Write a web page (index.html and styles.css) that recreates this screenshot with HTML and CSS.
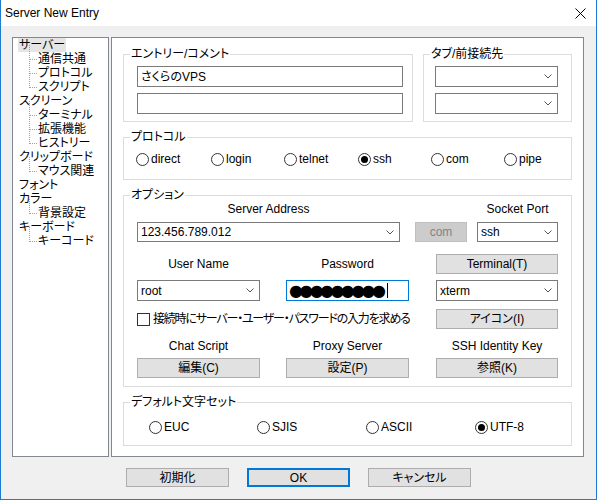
FILE: index.html
```html
<!DOCTYPE html>
<html lang="ja">
<head>
<meta charset="utf-8">
<title>Server New Entry</title>
<link rel="stylesheet" href="styles.css">
</head>
<body>
<div class="window">
  <div class="titlebar">
    <span class="title">Server New Entry</span>
    <svg class="close" width="11" height="11" viewBox="0 0 11 11"><path d="M0.5 0.5L10.5 10.5M10.5 0.5L0.5 10.5" stroke="#000" stroke-width="1" fill="none"/></svg>
  </div>
  <div class="client">
    <div class="main">
      <ul class="tree">
        <li><span class="node sel">サーバー</span>
          <ul class="sub">
            <li>通信共通</li>
            <li>プロトコル</li>
            <li>スクリプト</li>
          </ul>
        </li>
        <li><span class="node">スクリーン</span>
          <ul class="sub">
            <li>ターミナル</li>
            <li>拡張機能</li>
            <li>ヒストリー</li>
          </ul>
        </li>
        <li><span class="node">クリップボード</span>
          <ul class="sub">
            <li>マウス関連</li>
          </ul>
        </li>
        <li><span class="node">フォント</span></li>
        <li><span class="node">カラー</span>
          <ul class="sub">
            <li>背景設定</li>
          </ul>
        </li>
        <li><span class="node">キーボード</span>
          <ul class="sub">
            <li>キーコード</li>
          </ul>
        </li>
      </ul>

      <div class="panel">
        <div class="toprow">
          <fieldset class="group entry">
            <legend>エントリー/コメント</legend>
            <div class="stack entry-body">
              <div class="field">さくらのVPS</div>
              <div class="field"></div>
            </div>
          </fieldset>
          <fieldset class="group tabs">
            <legend>タブ/前接続先</legend>
            <div class="stack tabs-body">
              <div class="field combo w123"><span></span><svg class="chev" width="8" height="5" viewBox="0 0 8 5"><polyline points="0.5,0.5 4,4 7.5,0.5" fill="none" stroke="#555" stroke-width="1"/></svg></div>
              <div class="field combo w123"><span></span><svg class="chev" width="8" height="5" viewBox="0 0 8 5"><polyline points="0.5,0.5 4,4 7.5,0.5" fill="none" stroke="#555" stroke-width="1"/></svg></div>
            </div>
          </fieldset>
        </div>

        <fieldset class="group proto">
          <legend>プロトコル</legend>
          <div class="proto-body">
            <span class="radio"><span class="dot"></span>direct</span>
            <span class="radio"><span class="dot"></span>login</span>
            <span class="radio"><span class="dot"></span>telnet</span>
            <span class="radio on"><span class="dot"></span>ssh</span>
            <span class="radio"><span class="dot"></span>com</span>
            <span class="radio"><span class="dot"></span>pipe</span>
          </div>
        </fieldset>

        <fieldset class="group opts">
          <legend>オプション</legend>
          <div class="opts-body">
            <div class="row-a">
              <div class="col-addr">
                <div class="cap">Server Address</div>
                <div class="field combo h20"><span>123.456.789.012</span><svg class="chev" width="8" height="5" viewBox="0 0 8 5"><polyline points="0.5,0.5 4,4 7.5,0.5" fill="none" stroke="#555" stroke-width="1"/></svg></div>
              </div>
              <div class="col-com">
                <div class="btn disabled h20">com</div>
              </div>
              <div class="col-port">
                <div class="cap">Socket Port</div>
                <div class="field combo h20"><span>ssh</span><svg class="chev" width="8" height="5" viewBox="0 0 8 5"><polyline points="0.5,0.5 4,4 7.5,0.5" fill="none" stroke="#555" stroke-width="1"/></svg></div>
              </div>
            </div>

            <div class="grid3 row-b">
              <div class="cap w123">User Name</div>
              <div class="cap w123">Password</div>
              <div class="btn h20">Terminal(T)</div>
            </div>

            <div class="grid3 row-c">
              <div class="field combo w123"><span>root</span><svg class="chev" width="8" height="5" viewBox="0 0 8 5"><polyline points="0.5,0.5 4,4 7.5,0.5" fill="none" stroke="#555" stroke-width="1"/></svg></div>
              <div class="field pw w123"><span class="dots">●●●●●●●●●</span><span class="caret"></span></div>
              <div class="field combo"><span>xterm</span><svg class="chev" width="8" height="5" viewBox="0 0 8 5"><polyline points="0.5,0.5 4,4 7.5,0.5" fill="none" stroke="#555" stroke-width="1"/></svg></div>
            </div>

            <div class="grid3 row-d">
              <div class="check"><span class="box"></span><span class="check-text">接続時にサーバー・ユーザー・パスワードの入力を求める</span></div>
              <div class="btn h20">アイコン(I)</div>
            </div>

            <div class="grid3 row-e">
              <div class="cap w123">Chat Script</div>
              <div class="cap w123">Proxy Server</div>
              <div class="cap">SSH Identity Key</div>
            </div>

            <div class="grid3 row-f">
              <div class="btn h20 w123">編集(C)</div>
              <div class="btn h20 w123">設定(P)</div>
              <div class="btn h20">参照(K)</div>
            </div>
          </div>
        </fieldset>

        <fieldset class="group charset">
          <legend>デフォルト文字セット</legend>
          <div class="charset-body">
            <span class="radio"><span class="dot"></span>EUC</span>
            <span class="radio"><span class="dot"></span>SJIS</span>
            <span class="radio"><span class="dot"></span>ASCII</span>
            <span class="radio on"><span class="dot"></span>UTF-8</span>
          </div>
        </fieldset>
      </div>
    </div>

    <div class="actions">
      <div class="btn act">初期化</div>
      <div class="btn act default">OK</div>
      <div class="btn act">キャンセル</div>
    </div>
  </div>
</div>
</body>
</html>
```

FILE: styles.css
```css
* { box-sizing: border-box; }
html, body { margin: 0; padding: 0; }
body {
  width: 597px;
  height: 500px;
  overflow: hidden;
  background: #f0f0f0;
  color: #000;
  font-family: "Liberation Sans", "Noto Sans CJK JP", sans-serif;
  font-size: 12px;
  line-height: 14px;
  font-feature-settings: "palt";
}

.window {
  width: 597px;
  height: 500px;
  border: 1px solid #1f7bd2;
  border-top: 0;
  display: flex;
  flex-direction: column;
  background: #f0f0f0;
}

.titlebar {
  height: 26px;
  flex: none;
  background: #fff;
  display: flex;
  align-items: center;
  justify-content: space-between;
  padding: 0 10px 0 4px;
}
.title { font-size: 12px; }
.close { display: block; }

.client {
  flex: 1;
  padding: 11px 11px 0 11px;
}

.main {
  display: flex;
  gap: 2px;
  height: 420px;
}

/* tree */
.tree {
  width: 97px;
  flex: none;
  margin: 0;
  padding: 0 0 0 5px;
  list-style: none;
  background: #fff;
  border: 1px solid #828790;
}
.tree li { list-style: none; line-height: 14px; white-space: nowrap; }
.node { padding: 0 1px; display: inline-block; }
.sel { background: #e5e5e5; }
.sub {
  margin: 0;
  padding: 0 0 0 20px;
}
.sub li { position: relative; }
.sub li::before {
  content: "";
  position: absolute;
  left: -9px;
  top: -7px;
  width: 7px;
  height: 14px;
  border-left: 1px dotted #a0a0a0;
  border-bottom: 1px dotted #a0a0a0;
}

/* panel */
.panel {
  width: 473px;
  flex: none;
  background: #fff;
  border: 1px solid #828790;
  padding: 9px 11px 0 11px;
}

.group {
  margin: 0;
  padding: 0;
  min-width: 0;
  border: 1px solid #dcdcdc;
}
.group > legend {
  margin-left: 6px;
  padding: 0 1px;
  line-height: 14px;
}

.toprow { display: flex; gap: 10px; }
.entry { width: 290px; }
.tabs { width: 149px; }
.stack { display: flex; flex-direction: column; gap: 6px; }
.entry-body { padding: 5px 9px 7px 13px; }
.tabs-body { padding: 5px 0 7px 11px; }

.field {
  height: 21px;
  border: 1px solid #7a7a7a;
  background: #fff;
  padding: 0 3px;
  display: flex;
  align-items: center;
  white-space: nowrap;
}
.combo { justify-content: space-between; padding-right: 5px; }
.chev { display: block; flex: none; }
.w123 { width: 123px; }
.h20 { height: 20px; }

/* radios */
.radio {
  display: flex;
  align-items: center;
  gap: 2px;
  line-height: 14px;
}
.radio .dot {
  width: 13px;
  height: 13px;
  flex: none;
  border: 1px solid #333;
  border-radius: 50%;
  background: #fff;
  display: flex;
  align-items: center;
  justify-content: center;
}
.radio.on .dot::after {
  content: "";
  width: 7px;
  height: 7px;
  border-radius: 50%;
  background: #000;
}

.proto { margin-top: 8px; }
.proto-body {
  padding: 8px 0 13px 12px;
  display: grid;
  grid-template-columns: 75px 73px 74px 73px 73px 1fr;
}

/* options */
.opts { margin-top: 8px; }
.opts-body { padding: 0 0 8px 13px; }
.cap { text-align: center; line-height: 14px; white-space: nowrap; }

.row-a { display: flex; align-items: flex-end; }
.row-a .cap { margin-bottom: 6px; }
.col-addr { width: 263px; }
.col-com { width: 52px; margin-left: 15px; }
.col-port { width: 81px; margin-left: 10px; }

.grid3 {
  display: grid;
  grid-template-columns: 149px 150px 122px;
  align-items: center;
}
.row-b { margin-top: 12px; }
.row-c { margin-top: 6px; }
.row-d { margin-top: 8px; }
.row-e { margin-top: 10px; }
.row-f { margin-top: 5px; }

.check {
  grid-column: 1 / 3;
  display: flex;
  align-items: center;
  gap: 3px;
  white-space: nowrap;
}
.check-text { letter-spacing: -1.2px; }
.check .box {
  width: 13px;
  height: 13px;
  flex: none;
  border: 1px solid #333;
  background: #fff;
}

.pw { border-color: #0078d7; padding-left: 2px; }
.dots {
  font-family: "DejaVu Sans", sans-serif;
  font-size: 16px;
  line-height: 14px;
  letter-spacing: -3.6px;
}
.caret {
  width: 1px;
  height: 15px;
  background: #000;
  margin-left: 5px;
}

/* buttons */
.btn {
  background: #e1e1e1;
  border: 1px solid #adadad;
  display: flex;
  align-items: center;
  justify-content: center;
  line-height: 14px;
  white-space: nowrap;
}
.btn.disabled {
  background: #cccccc;
  border-color: #bfbfbf;
  color: #838383;
}
.btn.default { border: 2px solid #0078d7; }

/* charset */
.charset { margin-top: 8px; }
.charset-body {
  padding: 11px 0 11px 25px;
  display: grid;
  grid-template-columns: 108px 109px 109px 1fr;
}

.actions {
  display: flex;
  justify-content: center;
  gap: 18px;
  margin-top: 11px;
}
.act { width: 103px; height: 19px; }
```
